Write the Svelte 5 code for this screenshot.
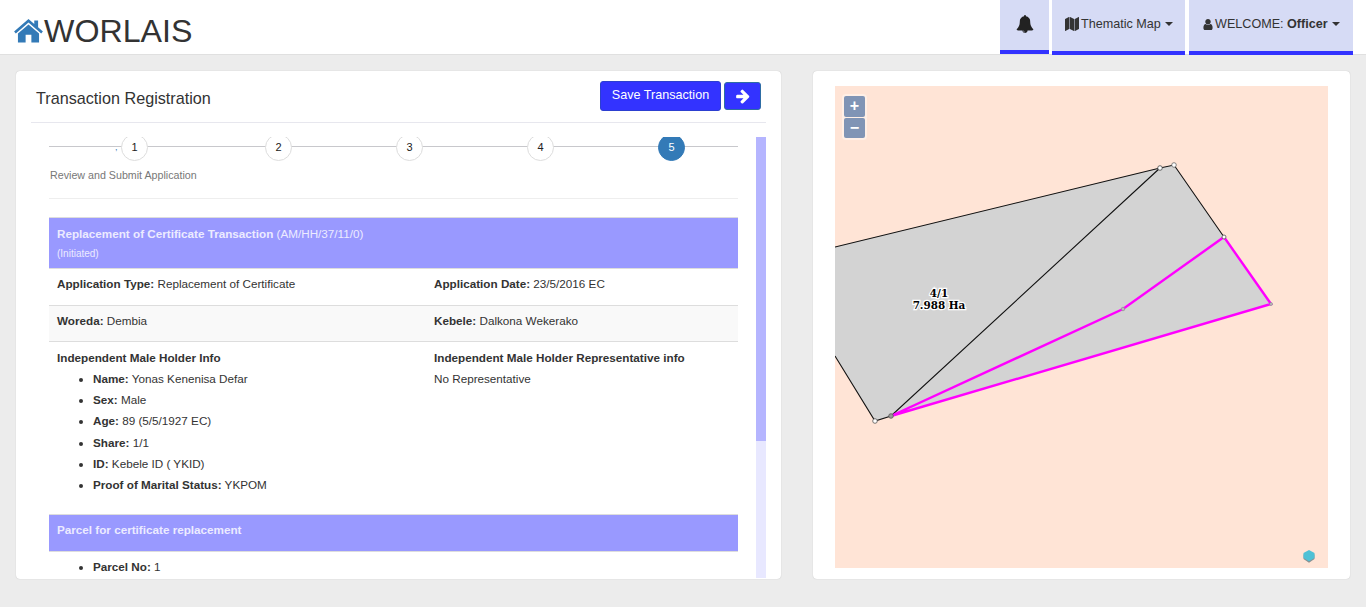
<script>
  const steps = [1, 2, 3, 4, 5];
  const holder = [
    ['Name:', 'Yonas Kenenisa Defar'],
    ['Sex:', 'Male'],
    ['Age:', '89 (5/5/1927 EC)'],
    ['Share:', '1/1'],
    ['ID:', 'Kebele ID ( YKID)'],
    ['Proof of Marital Status:', 'YKPOM']
  ];
</script>

<div class="page">
  <header class="nav">
    <div class="brand">
      <svg class="home" viewBox="0 0 30 25" aria-hidden="true">
        <path d="M15 0 L21 5.200 V1.500 H25 V8.700 L30 13 L28.200 15 L15 3.600 L1.800 15 L0 13 Z" />
        <path d="M15 5.800 L26 15.200 V24.500 H18 V16.500 H12 V24.500 H4 V15.200 Z" />
      </svg>
      <span>WORLAIS</span>
    </div>
    <nav class="menu">
      <div class="item bell">
        <svg viewBox="0 0 1792 1792" class="bell-i"><path d="M912 1696q0-16-16-16-59 0-101.500-42.500t-42.500-101.500q0-16-16-16t-16 16q0 73 51.500 124.500t124.500 51.500q16 0 16-16zm816-288q0 52-38 90t-90 38h-448q0 106-75 181t-181 75-181-75-75-181h-448q-52 0-90-38t-38-90q50-42 91-88t85-119.500 74.500-158.500 50-206 19.500-260q0-152 117-282.500t307-158.500q-8-19-8-39 0-40 28-68t68-28 68 28 28 68q0 20-8 39 190 28 307 158.500t117 282.500q0 139 19.500 260t50 206 74.500 158.500 85 119.500 91 88z"/></svg>
      </div>
      <div class="item map">
        <svg viewBox="0 0 1792 1792" class="ico"><path d="M512 0q13 0 22.500 9.500t9.500 22.500v1472q0 20-17 28l-480 256q-7 4-15 4-13 0-22.500-9.500t-9.500-22.500v-1472q0-20 17-28l480-256q7-4 15-4zm1248 0q13 0 22.500 9.500t9.500 22.500v1472q0 20-17 28l-480 256q-7 4-15 4-13 0-22.500-9.500t-9.500-22.500v-1472q0-20 17-28l480-256q7-4 15-4zm-1120 0q8 0 14 3l512 256q18 10 18 29v1472q0 13-9.500 22.500t-22.500 9.500q-8 0-14-3l-512-256q-18-10-18-29v-1472q0-13 9.500-22.500t22.500-9.500z"/></svg>
        <span>Thematic Map</span><i class="caret"></i>
      </div>
      <div class="item user">
        <svg viewBox="256 128 1280 1536" class="ico-u"><path d="M1536 1399q0 109-62.500 187t-150.500 78h-854q-88 0-150.500-78t-62.500-187q0-85 8.500-160.500t31.500-152 58.500-131 94-89 134.500-34.500q131 128 313 128t313-128q76 0 134.500 34.500t94 89 58.500 131 31.500 152 8.500 160.500zm-256-887q0 159-112.500 271.500t-271.500 112.500-271.500-112.500-112.500-271.500 112.500-271.500 271.500-112.500 271.500 112.500 112.500 271.500z"/></svg>
        <span>WELCOME: <b>Officer</b></span><i class="caret"></i>
      </div>
    </nav>
  </header>

  <main class="main">
    <section class="card left">
      <div class="card-head">
        <h1>Transaction Registration</h1>
        <div class="actions">
          <button class="btn save">Save Transaction</button>
          <button class="btn next" aria-label="Next">
            <svg viewBox="0 0 1792 1792"><path d="M1600 960q0 54-37 91l-651 651q-39 37-91 37-51 0-90-37l-75-75q-38-38-38-91t38-91l293-293h-704q-52 0-84.500-37.500t-32.500-90.500v-128q0-53 32.500-90.500t84.500-37.500h704l-293-294q-38-36-38-90t38-90l75-75q38-38 90-38 53 0 91 38l651 651q37 35 37 90z"/></svg>
          </button>
        </div>
      </div>
      <div class="card-body">
        <div class="content">
          <div class="stepper">
            <span class="tick">,</span>
            {#each steps as s}
              <div class="step" class:active={s === 5}>{s}</div>
            {/each}
          </div>
          <p class="step-label">Review and Submit Application</p>

          <div class="band tall">
            <div><b>Replacement of Certificate Transaction</b> (AM/HH/37/11/0)</div>
            <small>(Initiated)</small>
          </div>
          <div class="row r1">
            <div><b>Application Type:</b> Replacement of Certificate</div>
            <div><b>Application Date:</b> 23/5/2016 EC</div>
          </div>
          <div class="row r2">
            <div><b>Woreda:</b> Dembia</div>
            <div><b>Kebele:</b> Dalkona Wekerako</div>
          </div>
          <div class="row r3">
            <div>
              <b>Independent Male Holder Info</b>
              <ul>
                {#each holder as [k, v]}
                  <li><b>{k}</b> {v}</li>
                {/each}
              </ul>
            </div>
            <div>
              <b>Independent Male Holder Representative info</b>
              <div class="norep">No Representative</div>
            </div>
          </div>
          <div class="band short"><b>Parcel for certificate replacement</b></div>
          <ul class="parcel"><li><b>Parcel No:</b> 1</li></ul>
        </div>
        <div class="scrollbar"><div class="thumb"></div></div>
      </div>
    </section>

    <section class="card right">
      <div class="map-box">
        <svg class="map-svg" viewBox="835 86 493 482" width="493" height="482">
          <polygon points="835,247 1160,168 1174,165 1224,237 1271,304 891,416 875,421 835,356" fill="#d3d3d3" />
          <polyline points="835,247 1160,168 1174,165 1224,237" fill="none" stroke="#111" stroke-width="1.100" />
          <polyline points="835,356 875,421 891,416 1160,168" fill="none" stroke="#111" stroke-width="1.100" />
          <polygon points="891,416 1123,309 1224,237 1271,304" fill="none" stroke="#ff00ff" stroke-width="2.400" />
          <circle cx="1160" cy="168" r="2.300" fill="#fff" stroke="#444" stroke-width=".8" />
          <circle cx="1174" cy="165" r="2.300" fill="#fff" stroke="#666" stroke-width=".8" />
          <circle cx="1224" cy="237" r="2" fill="#fff" stroke="#555" stroke-width=".8" />
          <circle cx="875" cy="421" r="2.300" fill="#fff" stroke="#555" stroke-width=".8" />
          <circle cx="891" cy="416" r="2.300" fill="#999" stroke="#555" stroke-width=".8" />
          <circle cx="1123" cy="309" r="1.800" fill="#bbb" stroke="#888" stroke-width=".6" />
          <circle cx="1271" cy="304" r="1.500" fill="#bbb" stroke="#888" stroke-width=".6" />
          <text class="lbl" x="939" y="297">4/1</text>
          <text class="lbl" x="939" y="309">7.988 Ha</text>
        </svg>
        <div class="zoom">
          <button class="plus">+</button>
          <button class="minus">−</button>
        </div>
        <svg class="ol-logo" viewBox="0 0 12 13" aria-hidden="true">
          <polygon points="6,1.500 11.500,4.500 11.500,9 6,12.800 .5,9 .5,4.500" fill="#8a9092" />
          <polygon points="6,0 11.500,3 11.500,8 6,11.300 .5,8 .5,3" fill="#4fc1d6" />
        </svg>
      </div>
    </section>
  </main>
</div>

<style>
  :global(body) {
    margin: 0;
    background: #ececec;
    font-family: "Liberation Sans", Arial, sans-serif;
    color: #333;
  }
  .page {
    height: 607px;
    overflow: hidden;
    display: flex;
    flex-direction: column;
  }
  .nav {
    height: 54px;
    background: #fff;
    border-bottom: 1px solid #e0e0e0;
    display: flex;
    justify-content: space-between;
    flex-shrink: 0;
  }
  .brand {
    display: flex;
    align-items: center;
    padding-left: 14px;
    font-size: 32.200px;
    color: #333;
    height: 62px;
  }
  .brand span { margin-left: 1px; }
  .home { width: 29px; height: 24px; fill: #337ab7; }
  .menu {
    display: flex;
    gap: 3px;
    padding-right: 13px;
    height: 55px;
  }
  .item {
    background: #d6dbf5;
    border-bottom: 4px solid #3333ff;
    box-sizing: border-box;
    height: 55px;
    padding-bottom: 3px;
    display: flex;
    align-items: center;
    font-size: 12.600px;
    color: #333;
  }
  .item b { font-weight: bold; }
  .bell { width: 49px; justify-content: center; padding-top: 0; padding-bottom: 2px; height: 54px; }
  .map { width: 133px; padding-left: 13px; }
  .user { width: 164px; margin-left: 1px; padding-left: 14px; }
  .bell-i { width: 18px; height: 18px; fill: #222; }
  .ico { width: 14px; height: 14px; fill: #333; margin-right: 2px; }
  .ico-u { width: 10px; height: 11px; fill: #333; margin-right: 2px; }
  .caret {
    display: inline-block;
    width: 0;
    height: 0;
    margin-left: 4px;
    border-top: 4px solid #333;
    border-left: 4px solid transparent;
    border-right: 4px solid transparent;
  }
  .main {
    display: flex;
    gap: 32px;
    padding: 16px 16px 0;
  }
  .card {
    background: #fff;
    height: 508px;
    border-radius: 4px;
    box-shadow: 0 0 1px rgba(0,0,0,.25);
    box-sizing: border-box;
  }
  .left { width: 765px; padding: 0 15px; display: flex; flex-direction: column; }
  .right { width: 537px; padding: 15px 22px 0; }
  .card-head {
    height: 51px;
    flex-shrink: 0;
    border-bottom: 1px solid #e7e7ee;
    display: flex;
    justify-content: space-between;
    padding: 0 5px;
  }
  h1 {
    margin: 18px 0 0;
    font-size: 16.200px;
    font-weight: normal;
    line-height: 18px;
    color: #333;
  }
  .actions { display: flex; gap: 3px; padding-top: 10px; align-items: flex-start; }
  .btn {
    background: #3333ff;
    border: 1px solid #2e6da4;
    border-radius: 3px;
    color: #fff;
    font: 12.600px "Liberation Sans", Arial, sans-serif;
    margin: 0;
    padding: 0;
  }
  .save { width: 121px; height: 30px; padding-bottom: 3px; border-color: #2c3fd0; }
  .next { width: 37px; height: 28px; margin-top: 1px; display: flex; align-items: center; justify-content: center; }
  .next svg { width: 16px; height: 16px; fill: #fff; }
  .card-body {
    height: 441px;
    margin-top: 14px;
    display: flex;
    gap: 18px;
    padding-left: 18px;
    overflow: hidden;
  }
  .content { width: 689px; font-size: 11.700px; line-height: 17px; color: #333; overflow: hidden; }
  .scrollbar { width: 10px; height: 441px; background: #e8e8ff; }
  .thumb { height: 304px; background: #b5b5ff; }
  .stepper {
    position: relative;
    display: flex;
    gap: 104px;
    margin-top: -3px;
    padding-left: 72px;
  }
  .stepper::before {
    content: "";
    position: absolute;
    left: 0;
    right: 0;
    top: 12px;
    height: 1px;
    background: #c8c8cc;
  }
  .tick {
    position: absolute;
    left: 66px;
    top: 5px;
    font-size: 9px;
    color: #337ab7;
  }
  .step {
    position: relative;
    box-sizing: border-box;
    width: 27px;
    height: 27px;
    border: 1px solid #ddd;
    border-radius: 50%;
    background: #fff;
    text-align: center;
    line-height: 25px;
    font-size: 11px;
    color: #222;
  }
  .step:first-of-type { margin-right: 13px; }
  .step.active { background: #337ab7; border-color: #337ab7; color: #fff; }
  .step-label {
    margin: 0;
    padding: 6px 0 14px 1px;
    font-size: 10.700px;
    line-height: 17px;
    color: #777;
    border-bottom: 1px solid #eee;
  }
  .band {
    background: #9999ff;
    color: #ecebff;
    padding: 0 8px;
    border-top: 1px solid #ddd;
  }
  .tall { margin-top: 18px; height: 51px; box-sizing: border-box; padding-top: 7px; }
  .tall small { display: block; font-size: 10px; line-height: 12px; margin-top: 6px; }
  .short { height: 38px; box-sizing: border-box; padding-top: 6px; margin-top: 0; border-bottom: 1px solid #ddd; }
  .row {
    display: grid;
    grid-template-columns: 377px 312px;
    box-sizing: border-box;
    border-top: 1px solid #ddd;
  }
  .row > div { padding: 6px 8px 0; }
  .r1 { height: 37px; }
  .r2 { height: 36px; background: #f9f9f9; }
  .r3 { height: 173px; }
  .r3 > div { padding-top: 7px; }
  ul { margin: 4px 0 0; padding: 0 0 0 36px; }
  li { line-height: 17px; margin-bottom: 4.200px; }
  .norep { margin-top: 4px; }
  .parcel { margin-top: 6px; padding-left: 44px; }
  .map-box {
    position: relative;
    width: 493px;
    height: 482px;
    background: #ffe4d6;
    overflow: hidden;
  }
  .map-svg { display: block; }
  .lbl {
    font: bold 10.400px "DejaVu Serif", serif;
    text-anchor: middle;
    fill: #000;
    stroke: #fff;
    stroke-width: 2.500px;
    paint-order: stroke;
  }
  .zoom {
    position: absolute;
    left: 7px;
    top: 8px;
    padding: 2px;
    background: rgba(255,255,255,.4);
    border-radius: 4px;
    display: flex;
    flex-direction: column;
    gap: 1px;
  }
  .zoom button {
    width: 21px;
    margin: 0;
    padding: 0 0 2px;
    border: 0;
    border-radius: 2px;
    background: #8094b5;
    color: #fff;
    font: bold 16px/17px "Liberation Sans", Arial, sans-serif;
  }
  .plus { height: 21px; }
  .minus { height: 20px; }
  .ol-logo {
    position: absolute;
    right: 13px;
    bottom: 5px;
    width: 12px;
    height: 13px;
  }
</style>
